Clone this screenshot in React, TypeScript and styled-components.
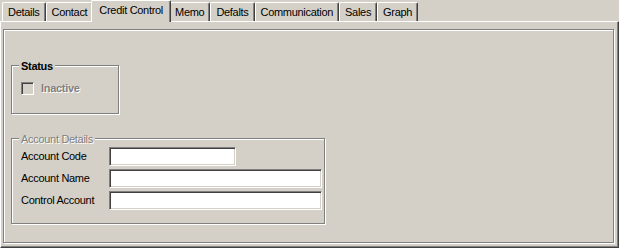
import React from 'react';
import styled, { createGlobalStyle } from 'styled-components';

const GlobalStyle = createGlobalStyle`
  html, body {
    margin: 0;
    padding: 0;
    background: #d4d0c8;
  }
  body {
    font-family: "Liberation Sans", Arial, sans-serif;
    font-size: 11px;
    color: #000;
  }
  #root {
    width: 619px;
    height: 248px;
    overflow: hidden;
  }
`;

const Window = styled.div`
  width: 619px;
  height: 248px;
  display: flex;
  flex-direction: column;
`;

const TabStrip = styled.div`
  display: flex;
  align-items: flex-start;
  height: 21px;
  padding-left: 2px;
`;

const Tab = styled.div<{ $active?: boolean }>`
  position: relative;
  z-index: ${p => (p.$active ? 2 : 1)};
  box-sizing: border-box;
  height: ${p => (p.$active ? 22 : 19)}px;
  margin: ${p => (p.$active ? '0 -2px -1px' : '2px 0 0')};
  padding: ${p => (p.$active ? '3px 7px 0' : '3px 5px 0')};
  background: #d4d0c8;
  border-top: 1px solid #fff;
  border-left: 1px solid #fff;
  border-right: 1px solid #404040;
  border-radius: 2px 2px 0 0;
  box-shadow: inset -1px 0 #808080;
  line-height: 13px;
  letter-spacing: -0.3px;
  white-space: nowrap;
`;

const Pane = styled.div`
  box-sizing: border-box;
  height: 227px;
  border-top: 1px solid #fff;
  border-left: 1px solid #fff;
  border-right: 1px solid #404040;
  border-bottom: 1px solid #404040;
  box-shadow: inset -1px -1px #808080;
  padding: 7px 0 0 2px;
`;

const Bevel = styled.div`
  box-sizing: border-box;
  width: 611px;
  height: 214px;
  border: 1px solid #808080;
  box-shadow: inset 1px 1px #fff, 1px 1px #fff;
  padding: 35px 0 0 7px;
`;

const GroupBox = styled.div<{ $w: number; $h: number; $gap?: number }>`
  position: relative;
  box-sizing: border-box;
  width: ${p => p.$w}px;
  height: ${p => p.$h}px;
  margin-top: ${p => p.$gap || 0}px;
  border: 1px solid #808080;
  box-shadow: inset 1px 1px #fff, 1px 1px #fff;
`;

const GroupTitle = styled.span<{ $bold?: boolean; $disabled?: boolean }>`
  position: absolute;
  left: 7px;
  top: -6px;
  padding: 0 2px;
  background: #d4d0c8;
  line-height: 13px;
  letter-spacing: -0.3px;
  font-weight: ${p => (p.$bold ? 700 : 400)};
  color: ${p => (p.$disabled ? '#808080' : '#000')};
  text-shadow: ${p => (p.$disabled ? '1px 1px 0 #fff' : 'none')};
  white-space: nowrap;
`;

const CheckRow = styled.label`
  display: flex;
  align-items: center;
  gap: 7px;
  padding: 16px 0 0 9px;
`;

const CheckBox = styled.span`
  box-sizing: border-box;
  width: 13px;
  height: 13px;
  background: #d4d0c8;
  border: 1px solid;
  border-color: #808080 #fff #fff #808080;
  box-shadow: inset 1px 1px #404040, inset -1px -1px #d4d0c8;
`;

const DisabledText = styled.span<{ $bold?: boolean }>`
  line-height: 13px;
  letter-spacing: -0.3px;
  font-weight: ${p => (p.$bold ? 700 : 400)};
  color: #808080;
  text-shadow: 1px 1px 0 #fff;
`;

const FieldGrid = styled.div`
  display: grid;
  grid-template-columns: 88px auto;
  grid-auto-rows: 19px;
  row-gap: 3px;
  align-items: center;
  padding: 8px 0 0 9px;
`;

const FieldLabel = styled.span`
  line-height: 13px;
  letter-spacing: -0.3px;
  white-space: nowrap;
`;

const Edit = styled.input<{ $w: number }>`
  box-sizing: border-box;
  width: ${p => p.$w}px;
  height: 19px;
  margin: 0;
  padding: 0 3px;
  background: #fff;
  border: 1px solid;
  border-color: #808080 #fff #fff #808080;
  box-shadow: inset 1px 1px #404040, inset -1px -1px #d4d0c8;
  font: inherit;
  outline: none;
`;

const tabs = ['Details', 'Contact', 'Credit Control', 'Memo', 'Defalts', 'Communication', 'Sales', 'Graph'];

const fields = [
  { label: 'Account Code', width: 127 },
  { label: 'Account Name', width: 213 },
  { label: 'Control Account', width: 213 },
];

export default function App() {
  return (
    <>
      <GlobalStyle />
      <Window>
        <TabStrip>
          {tabs.map(t => (
            <Tab key={t} $active={t === 'Credit Control'}>
              {t}
            </Tab>
          ))}
        </TabStrip>
        <Pane>
          <Bevel>
            <GroupBox $w={108} $h={49}>
              <GroupTitle $bold>Status</GroupTitle>
              <CheckRow>
                <CheckBox />
                <DisabledText $bold>Inactive</DisabledText>
              </CheckRow>
            </GroupBox>
            <GroupBox $w={314} $h={86} $gap={24}>
              <GroupTitle $disabled>Account Details</GroupTitle>
              <FieldGrid>
                {fields.map(f => (
                  <React.Fragment key={f.label}>
                    <FieldLabel>{f.label}</FieldLabel>
                    <Edit $w={f.width} />
                  </React.Fragment>
                ))}
              </FieldGrid>
            </GroupBox>
          </Bevel>
        </Pane>
      </Window>
    </>
  );
}
